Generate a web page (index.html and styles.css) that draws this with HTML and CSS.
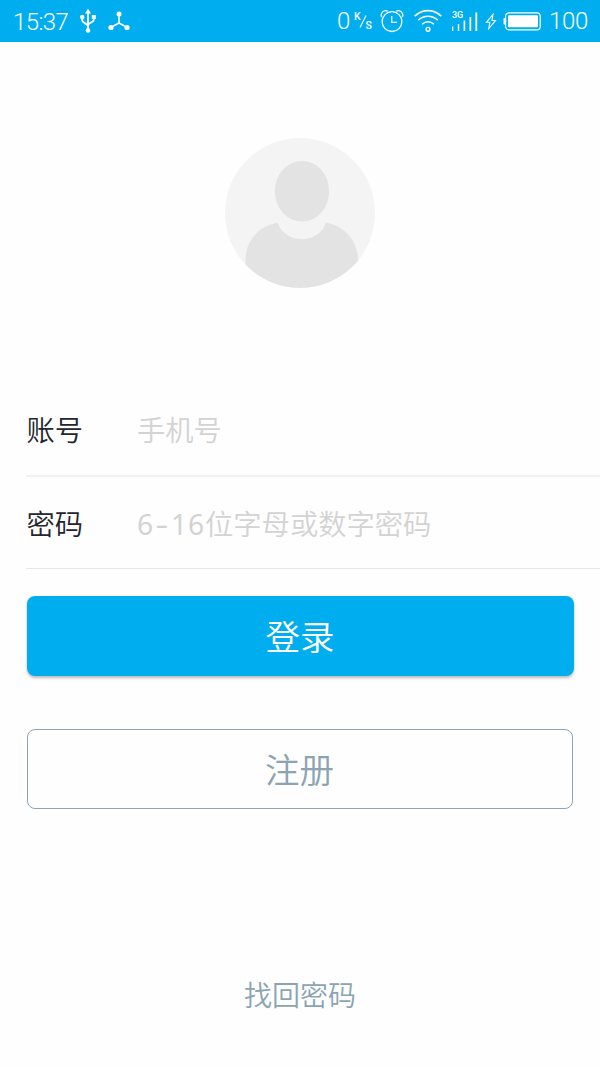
FILE: index.html
```html
<!DOCTYPE html>
<html lang="zh-CN">
<head>
<meta charset="utf-8">
<title>登录</title>
<link rel="stylesheet" href="styles.css">
</head>
<body>
<header class="status">
  <span class="time">15:37</span>
  <svg class="usb" width="18" height="26" viewBox="0 0 18 26" fill="none" stroke="#fff" stroke-width="1.8">
    <path d="M9 4v18M3.2 9v3.5c0 2.5 5.8 2.8 5.8 6M14.8 9v3c0 2.5-5.8 2.800-5.800 5"/>
    <path d="M9 .8l3 4.700H6z" fill="#fff" stroke="none"/>
    <circle cx="9" cy="22.500" r="2.300" fill="#fff" stroke="none"/>
    <circle cx="3.200" cy="9" r="2.200" fill="#fff" stroke="none"/>
    <path d="M12.800 7h4v4h-4z" fill="#fff" stroke="none"/>
  </svg>
  <svg class="nodes" width="22" height="20" viewBox="0 0 22 20" fill="#fff">
    <path d="M11 3v9L3 16.400M11 12l8 4.400" fill="none" stroke="#fff" stroke-width="1.600"/>
    <circle cx="11" cy="3" r="2.500"/><circle cx="3" cy="16.500" r="2.600"/><circle cx="19" cy="16.500" r="2.600"/>
  </svg>
  <span class="spacer"></span>
  <span class="rate">0</span>
  <span class="unit"><span class="unit-k">K</span><svg class="slash" width="8" height="13" viewBox="0 0 8 13"><path d="M7 .5L1 12.500" stroke="#fff" stroke-width="1.100"/></svg><span class="unit-s">S</span></span>
  <svg class="alarm" width="24" height="24" viewBox="0 0 24 24" fill="none" stroke="#fff" stroke-width="1.300">
    <circle cx="12" cy="12.600" r="9.900"/>
    <path d="M11.700 7v6.300h5.200"/>
    <path d="M1.600 8C0 4.500 3.500.4 7.700 2.200M22.400 8C24 4.500 20.500.4 16.300 2.200"/>
  </svg>
  <svg class="wifi" width="28" height="24" viewBox="0 0 28 24" fill="none" stroke="#fff" stroke-width="1.600">
    <path d="M.7 7.200C8.500-.3 19.500-.3 27.300 7.200M4.300 11.200C10 6 18 6 23.700 11.200M8.200 15.200C11.500 12 16.500 12 19.800 15.200"/>
    <circle cx="14" cy="20.300" r="1.900" stroke-width="1.400"/>
  </svg>
  <span class="signal">
    <span class="net">3G</span>
    <svg class="bars" width="26" height="20" viewBox="0 0 26 20" fill="#fff">
      <path d="M0 15.500h1.300V20H0zM5.800 13h1.400v7H5.800zM11.600 9.500h1.600V20h-1.600zM17.500 6h1.700v14h-1.700zM23.400 1.500h1.800V20h-1.800z"/>
    </svg>
  </span>
  <svg class="bolt" width="12" height="17" viewBox="0 0 12 17" fill="none" stroke="#fff" stroke-width="1.100">
    <path d="M8 1.300L1.500 9.200h3.300L3.800 15.500l6.700-8H7z"/>
  </svg>
  <svg class="battery" width="38" height="19" viewBox="0 0 38 19">
    <rect x="2.600" y=".8" width="34.600" height="17" rx="3.300" fill="none" stroke="#fff" stroke-width="1.200"/>
    <rect x="5" y="3.300" width="30" height="12" rx="1.200" fill="#fff"/>
    <path d="M2 6H1.200Q.5 6 .5 7v4.500q0 1 .7 1H2z" fill="#fff"/>
  </svg>
  <span class="percent">100</span>
</header>
<main class="page">
  <svg class="avatar" width="150" height="150" viewBox="0 0 150 150">
    <defs><clipPath id="disc"><circle cx="75" cy="75" r="75"/></clipPath></defs>
    <g clip-path="url(#disc)">
      <rect width="150" height="150" fill="#f4f4f4"/>
      <ellipse cx="77" cy="53.300" rx="27.200" ry="30.300" fill="#e3e3e3"/>
      <path d="M20.500 150V122C20.500 102 35 87.500 52.500 84.800C56 94.500 65.500 101.200 77 101.200S97.500 94.500 101 84.800C118.500 87.500 133 102 133 122V150z" fill="#e3e3e3"/>
    </g>
  </svg>
  <form class="form">
    <div class="row row-account"><span class="label">账号</span><span class="hint">手机号</span></div>
    <div class="row row-password"><span class="label">密码</span><span class="hint"><span class="mono">6<span class="dash">-</span>16</span>位字母或数字密码</span></div>
    <button class="button login" type="button">登录</button>
    <button class="button register" type="button">注册</button>
  </form>
  <a class="recover">找回密码</a>
</main>
</body>
</html>
```

FILE: styles.css
```css
* { box-sizing: border-box; }
body {
  margin: 0;
  width: 600px;
  height: 1067px;
  overflow: hidden;
  background: #fefefe;
  font-family: "Noto Sans CJK SC", "Noto Sans", sans-serif;
  font-weight: 350;
}
svg { display: block; flex: none; }
.status {
  display: flex;
  align-items: center;
  height: 42px;
  padding: 0 12px 0 13px;
  background: #00aeef;
  color: #fff;
  font-family: Roboto, sans-serif;
  font-weight: 300;
  font-size: 24px;
  line-height: 42px;
}
.time { width: 66px; padding-top: 2px; letter-spacing: -0.6px; }
.nodes { margin-left: 11px; }
.spacer { flex: 1; }
.rate { width: 17px; }
.unit {
  display: flex;
  width: 17px;
  height: 19px;
  font-size: 10.5px;
  font-weight: 500;
  line-height: 10px;
}
.unit-k { width: 6px; }
.slash { margin: 3px -1px 0 -1.5px; }
.unit-s { align-self: flex-end; }
.alarm { margin-left: 9px; }
.wifi { margin-left: 10px; }
.signal {
  display: grid;
  width: 26px;
  height: 20px;
  margin-left: 10px;
}
.net, .bars { grid-area: 1 / 1; }
.net {
  font-size: 9px;
  font-weight: 500;
  line-height: 8px;
}
.bolt { margin-left: 7px; }
.battery { margin-left: 6px; }
.percent { margin-left: 8px; width: 39px; letter-spacing: -0.3px; }

.page {
  display: flex;
  flex-direction: column;
  align-items: center;
  padding-top: 96px;
}
.form {
  display: flex;
  flex-direction: column;
  width: 600px;
  margin-top: 96px;
  padding-left: 26px;
}
.row {
  display: flex;
  align-items: center;
  border-bottom: 1px solid #e6e6e6;
  font-size: 28.3px;
}
.row-account {
  height: 93px;
  padding-bottom: 2px;
  border-bottom: 2px solid #f1f1f1;
}
.row-password { height: 92px; padding-bottom: 1px; }
.label { width: 111px; padding-left: 0.5px; color: #23262e; }
.hint { color: #d3d3d3; }
.mono { font-family: "Noto Sans", sans-serif; font-weight: 400; letter-spacing: 0.8px; }
.dash {
  display: inline-block;
  width: 17px;
  text-align: center;
  transform: scaleX(1.4);
}
.button {
  width: 547px;
  height: 80px;
  margin-left: 0.5px;
  padding: 0 0 2px;
  border: 0;
  border-radius: 8px;
  font: inherit;
  font-size: 34.5px;
}
.login {
  margin-top: 27px;
  background: #00aeef;
  color: #fff;
  box-shadow: 0 2px 3px rgba(0, 0, 0, 0.27);
}
.register {
  width: 546px;
  margin-top: 53px;
  border: 1px solid #8fa5b5;
  background: transparent;
  color: #8ca4b2;
}
.recover {
  margin-top: 164px;
  color: #8ca4b2;
  font-size: 28px;
  line-height: 42px;
}
```
